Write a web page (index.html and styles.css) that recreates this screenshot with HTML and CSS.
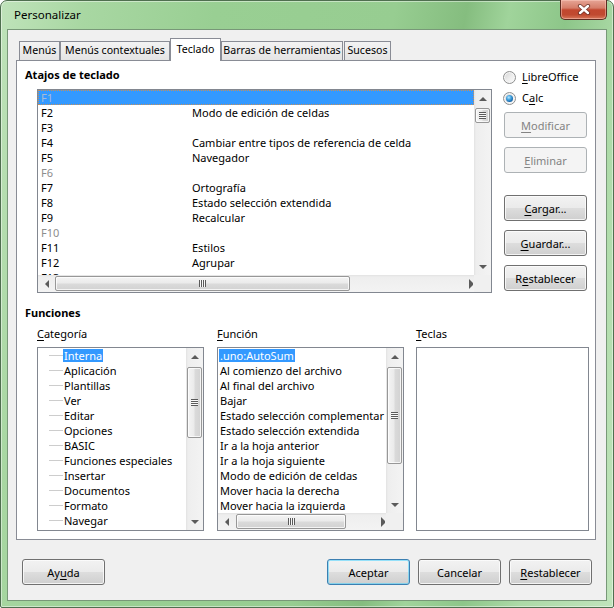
FILE: index.html
```html
<!DOCTYPE html>
<html lang="es">
<head>
<meta charset="utf-8">
<title>Personalizar</title>
<link rel="stylesheet" href="styles.css">
</head>
<body>
<div class="window">
  <div class="titlebar">
    <span class="title">Personalizar</span>
    <div class="close">
      <svg width="14" height="11" viewBox="0 0 14 11">
        <path d="M3 2 L11 9 M11 2 L3 9" stroke="#5a2a22" stroke-width="4.2" stroke-linecap="round" fill="none" opacity="0.75"/>
        <path d="M3 2 L11 9 M11 2 L3 9" stroke="#ffffff" stroke-width="2.4" stroke-linecap="round" fill="none"/>
      </svg>
    </div>
  </div>
  <div class="client">
    <div class="tabs">
      <div class="tab w1">Menús</div>
      <div class="tab w2">Menús contextuales</div>
      <div class="tab w3 active">Teclado</div>
      <div class="tab w4">Barras de herramientas</div>
      <div class="tab w5">Sucesos</div>
    </div>
    <div class="panel">
      <div class="top">
        <div class="left">
          <div class="heading">Atajos de teclado</div>
          <div class="listbox shortcuts">
            <div class="lb-main">
              <div class="rows">
                <div class="row sel"><span class="key dis">F1</span><span class="fn"></span></div>
                <div class="row"><span class="key">F2</span><span class="fn">Modo de edición de celdas</span></div>
                <div class="row"><span class="key">F3</span><span class="fn"></span></div>
                <div class="row"><span class="key">F4</span><span class="fn">Cambiar entre tipos de referencia de celda</span></div>
                <div class="row"><span class="key">F5</span><span class="fn">Navegador</span></div>
                <div class="row"><span class="key dis">F6</span><span class="fn"></span></div>
                <div class="row"><span class="key">F7</span><span class="fn">Ortografía</span></div>
                <div class="row"><span class="key">F8</span><span class="fn">Estado selección extendida</span></div>
                <div class="row"><span class="key">F9</span><span class="fn">Recalcular</span></div>
                <div class="row"><span class="key dis">F10</span><span class="fn"></span></div>
                <div class="row"><span class="key">F11</span><span class="fn">Estilos</span></div>
                <div class="row"><span class="key">F12</span><span class="fn">Agrupar</span></div>
                <div class="row"><span class="key">F13</span><span class="fn"></span></div>
              </div>
              <div class="vscroll">
                <div class="sbtn"><span class="arr up"></span></div>
                <div class="track">
                  <div class="thumb v" style="margin-top:1px;height:15px"><span class="grip gv"></span></div>
                </div>
                <div class="sbtn"><span class="arr down"></span></div>
              </div>
            </div>
            <div class="lb-bottom">
              <div class="hscroll">
                <div class="sbtn"><span class="arr left"></span></div>
                <div class="track">
                  <div class="thumb h" style="margin-left:0px;width:295px"><span class="grip gh"></span></div>
                </div>
                <div class="sbtn"><span class="arr right"></span></div>
              </div>
              <div class="corner"></div>
            </div>
          </div>
        </div>
        <div class="right">
          <div class="radio-row"><span class="radio"></span><span class="rlabel"><u>L</u>ibreOffice</span></div>
          <div class="radio-row r2"><span class="radio on"></span><span class="rlabel">C<u>a</u>lc</span></div>
          <div class="btn disabled b-mod"><u>M</u>odificar</div>
          <div class="btn disabled b-del"><u>E</u>liminar</div>
          <div class="btn b-load"><u>C</u>argar...</div>
          <div class="btn b-gap"><u>G</u>uardar...</div>
          <div class="btn b-gap">R<u>e</u>stablecer</div>
        </div>
      </div>
      <div class="heading fheading">Funciones</div>
      <div class="cols">
        <div class="col c1">
          <div class="clabel"><u>C</u>ategoría</div>
          <div class="listbox cat">
            <div class="rows">
              <div class="trow"><span class="tl"></span><span class="tt hl">Interna</span></div>
              <div class="trow"><span class="tl"></span><span class="tt">Aplicación</span></div>
              <div class="trow"><span class="tl"></span><span class="tt">Plantillas</span></div>
              <div class="trow"><span class="tl"></span><span class="tt">Ver</span></div>
              <div class="trow"><span class="tl"></span><span class="tt">Editar</span></div>
              <div class="trow"><span class="tl"></span><span class="tt">Opciones</span></div>
              <div class="trow"><span class="tl"></span><span class="tt">BASIC</span></div>
              <div class="trow"><span class="tl"></span><span class="tt">Funciones especiales</span></div>
              <div class="trow"><span class="tl"></span><span class="tt">Insertar</span></div>
              <div class="trow"><span class="tl"></span><span class="tt">Documentos</span></div>
              <div class="trow"><span class="tl"></span><span class="tt">Formato</span></div>
              <div class="trow"><span class="tl"></span><span class="tt">Navegar</span></div>
            </div>
            <div class="vscroll">
              <div class="sbtn"><span class="arr up"></span></div>
              <div class="track">
                <div class="thumb v" style="margin-top:2px;height:71px"><span class="grip gv"></span></div>
              </div>
              <div class="sbtn"><span class="arr down"></span></div>
            </div>
          </div>
        </div>
        <div class="col c2">
          <div class="clabel"><u>F</u>unción</div>
          <div class="listbox func">
            <div class="lb-main">
              <div class="rows">
                <div class="frow"><span class="ft hl">.uno:AutoSum</span></div>
                <div class="frow"><span class="ft">Al comienzo del archivo</span></div>
                <div class="frow"><span class="ft">Al final del archivo</span></div>
                <div class="frow"><span class="ft">Bajar</span></div>
                <div class="frow"><span class="ft">Estado selección complementar</span></div>
                <div class="frow"><span class="ft">Estado selección extendida</span></div>
                <div class="frow"><span class="ft">Ir a la hoja anterior</span></div>
                <div class="frow"><span class="ft">Ir a la hoja siguiente</span></div>
                <div class="frow"><span class="ft">Modo de edición de celdas</span></div>
                <div class="frow"><span class="ft">Mover hacia la derecha</span></div>
                <div class="frow"><span class="ft">Mover hacia la izquierda</span></div>
              </div>
              <div class="vscroll">
                <div class="sbtn"><span class="arr up"></span></div>
                <div class="track">
                  <div class="thumb v" style="margin-top:2px;height:97px"><span class="grip gv"></span></div>
                </div>
                <div class="sbtn"><span class="arr down"></span></div>
              </div>
            </div>
            <div class="lb-bottom">
              <div class="hscroll">
                <div class="sbtn"><span class="arr left"></span></div>
                <div class="track">
                  <div class="thumb h" style="margin-left:1px;width:110px"><span class="grip gh"></span></div>
                </div>
                <div class="sbtn"><span class="arr right"></span></div>
              </div>
              <div class="corner"></div>
            </div>
          </div>
        </div>
        <div class="col c3">
          <div class="clabel"><u>T</u>eclas</div>
          <div class="listbox keys"></div>
        </div>
      </div>
    </div>
    <div class="footer">
      <div class="btn fbtn">Ay<u>u</u>da</div>
      <div class="spacer"></div>
      <div class="btn fbtn default">Aceptar</div>
      <div class="btn fbtn fgap">Cancelar</div>
      <div class="btn fbtn fgap"><u>R</u>establecer</div>
    </div>
  </div>
</div>
</body>
</html>
```

FILE: styles.css
```css
* { box-sizing: border-box; }
html, body { margin: 0; padding: 0; }
body {
  width: 614px;
  height: 608px;
  overflow: hidden;
  font-family: "Noto Sans", "Open Sans", sans-serif;
  font-size: 11px;
  color: #000;
  background: #ffffff;
}
u { text-decoration-thickness: 1px; text-underline-offset: 2px; }

.window {
  width: 614px;
  height: 608px;
  display: flex;
  flex-direction: column;
  padding: 0 6px 6px 6px;
  border: 1px solid #4f6f4f;
  border-radius: 7px 7px 2px 2px;
  background: linear-gradient(100deg, #bfe3ba 0%, #a8d7a2 12%, #99cf93 30%, #97cd91 55%, #85bd7f 65%, #a0d49b 71%, #8dc689 79%, #acdaa7 87%, #c0e4bb 100%);
  box-shadow: inset 0 0 0 1px rgba(255,255,255,0.45);
}

.titlebar {
  height: 28px;
  display: flex;
  align-items: flex-start;
}
.title {
  margin-left: 7px;
  margin-top: 6px;
  font-size: 11.5px;
  line-height: 16px;
  color: #000;
}
.close {
  margin-left: auto;
  margin-top: -1px;
  width: 47px;
  height: 20px;
  border: 1px solid #5e2c22;
  border-top: none;
  border-radius: 0 0 5px 5px;
  background: linear-gradient(#e6a596 0%, #d57d69 42%, #c2472f 52%, #c04a30 78%, #d8785b 100%);
  box-shadow: inset 0 0 0 1px rgba(255,210,200,0.45);
  display: flex;
  align-items: center;
  justify-content: center;
}
.close svg { display: block; }

.client {
  flex: 1;
  display: flex;
  flex-direction: column;
  border: 1px solid #789878;
  background: #f0f0f0;
}

/* Tabs */
.tabs {
  margin-top: 8px;
  height: 22px;
  padding-left: 11px;
  display: flex;
  align-items: flex-end;
  position: relative;
  z-index: 2;
}
.tab {
  height: 19px;
  border: 1px solid #898c95;
  border-bottom: none;
  background: linear-gradient(#f3f3f3, #e4e4e4);
  text-align: center;
  line-height: 17px;
  font-size: 10.6px;
  white-space: nowrap;
  overflow: hidden;
}
.tab.active {
  height: 23px;
  margin-bottom: -1px;
  background: #ffffff;
  line-height: 20px;
}
.w1 { width: 41px; }
.w2 { width: 110px; }
.w3 { width: 51px; }
.w4 { width: 122px; }
.w5 { width: 47px; margin-left: 1px; }

/* Panel */
.panel {
  margin-left: 8px;
  width: 580px;
  height: 480px;
  border: 1px solid #898c95;
  background: #ffffff;
  padding: 6px 0 0 8px;
}
.heading {
  font-weight: bold;
  line-height: 16px;
  height: 16px;
}
.top { display: flex; }
.left { width: 467px; }
.left .heading { margin-bottom: 6px; }

.listbox {
  border: 1px solid #828790;
  background: #ffffff;
  overflow: hidden;
}
.shortcuts {
  margin-left: 12px;
  width: 455px;
  height: 204px;
  display: flex;
  flex-direction: column;
}
.lb-main { flex: 1; display: flex; min-height: 0; }
.lb-bottom { height: 17px; display: flex; }
.rows { flex: 1; overflow: hidden; min-width: 0; }

.row {
  height: 15px;
  line-height: 15px;
  display: flex;
  white-space: nowrap;
}
.row .key { width: 154px; padding-left: 3px; flex: none; }
.row .fn { flex: none; }
.key.dis { color: #8d8d8d; }
.row.sel {
  background: #3399ff;
  outline: 1px dotted #c8905a;
  outline-offset: -1px;
}
.row.sel .key.dis { color: #a7bcd6; }

/* Scrollbars */
.vscroll {
  width: 17px;
  flex: none;
  display: flex;
  flex-direction: column;
  background: linear-gradient(to right, #e2e2e2 0, #eeeeee 2px, #f3f3f3 100%);
}
.hscroll {
  flex: 1;
  display: flex;
  background: linear-gradient(to bottom, #e2e2e2 0, #eeeeee 2px, #f3f3f3 100%);
}
.corner { width: 17px; flex: none; background: #f0f0f0; }
.sbtn {
  width: 17px;
  height: 17px;
  flex: none;
  display: flex;
  align-items: center;
  justify-content: center;
}
.vscroll .track { flex: 1; display: flex; flex-direction: column; min-height: 0; }
.hscroll .track { flex: 1; display: flex; min-width: 0; }
.arr { width: 0; height: 0; display: block; }
.arr.up { border-left: 4px solid transparent; border-right: 4px solid transparent; border-bottom: 4px solid #5b5b5b; }
.arr.down { border-left: 4px solid transparent; border-right: 4px solid transparent; border-top: 4px solid #5b5b5b; }
.arr.left { border-top: 4px solid transparent; border-bottom: 4px solid transparent; border-right: 4px solid #5b5b5b; }
.arr.right { border-top: 4px solid transparent; border-bottom: 4px solid transparent; border-left: 4px solid #5b5b5b; }

.thumb {
  border: 1px solid #979797;
  border-radius: 2px;
  display: flex;
  align-items: center;
  justify-content: center;
  flex: none;
}
.thumb.v {
  margin-left: 1px;
  margin-right: 1px;
  background: linear-gradient(to right, #f4f4f4 0%, #ebebeb 45%, #dadada 55%, #d2d2d2 100%);
  box-shadow: inset 0 0 0 1px rgba(255,255,255,0.75);
}
.thumb.h {
  margin-top: 1px;
  margin-bottom: 1px;
  background: linear-gradient(to bottom, #f4f4f4 0%, #ebebeb 45%, #dadada 55%, #d2d2d2 100%);
  box-shadow: inset 0 0 0 1px rgba(255,255,255,0.75);
}
.grip { display: block; }
.grip.gv {
  width: 7px;
  height: 7px;
  background: repeating-linear-gradient(to bottom, #5a5a5a 0 1px, #f8f8f8 1px 2px);
}
.grip.gh {
  width: 7px;
  height: 7px;
  background: repeating-linear-gradient(to right, #5a5a5a 0 1px, #f8f8f8 1px 2px);
}

/* Right column */
.right {
  margin-left: 12px;
  width: 83px;
  padding-top: 2px;
  display: flex;
  flex-direction: column;
}
.radio-row { height: 16px; display: flex; align-items: center; white-space: nowrap; }
.radio-row.r2 { margin-top: 5px; }
.radio {
  width: 13px;
  height: 13px;
  margin-left: -1px;
  border-radius: 50%;
  border: 1px solid #8e8f8f;
  background: linear-gradient(135deg, #d4d4d4 0%, #eeeeee 55%, #fbfbfb 100%);
  box-shadow: inset 0 0 0 1px #f6f6f6;
  position: relative;
  flex: none;
}
.radio.on::after {
  content: "";
  position: absolute;
  left: 2px;
  top: 2px;
  width: 7px;
  height: 7px;
  border-radius: 50%;
  background: radial-gradient(circle at 40% 35%, #b6e6ff 0%, #48a6e0 35%, #1668ad 70%, #0c3f78 100%);
}
.rlabel { margin-left: 6px; line-height: 16px; }

.btn {
  width: 83px;
  height: 26px;
  border: 1px solid #707070;
  border-radius: 3px;
  background: linear-gradient(#f2f2f2 0%, #ebebeb 48%, #dddddd 52%, #cfcfcf 100%);
  box-shadow: inset 0 0 0 1px rgba(252,252,252,0.8);
  display: flex;
  align-items: center;
  justify-content: center;
  white-space: nowrap;
  flex: none;
}
.btn.disabled {
  border-color: #adb2b5;
  background: #f4f4f4;
  box-shadow: none;
  color: #838383;
}
.b-mod { margin-top: 6px; }
.b-del { margin-top: 9px; }
.b-load { margin-top: 22px; }
.b-gap { margin-top: 9px; }

/* Functions */
.fheading { margin-top: 12px; }
.cols { display: flex; margin-top: 5px; margin-left: 12px; }
.col { display: flex; flex-direction: column; }
.c1 { width: 167px; }
.c2 { width: 187px; margin-left: 13px; }
.c3 { width: 173px; margin-left: 12px; }
.clabel { line-height: 16px; height: 16px; margin-bottom: 5px; }
.cat, .func, .keys { height: 184px; }
.cat { display: flex; }
.func { display: flex; flex-direction: column; }

.trow {
  height: 15px;
  display: flex;
  align-items: center;
  white-space: nowrap;
}
.tl {
  width: 14px;
  margin-left: 11px;
  height: 0;
  border-top: 1px solid #cdcdcd;
  flex: none;
}
.tt { padding: 0 1px; line-height: 13px; }
.hl { background: #3399ff; color: #ffffff; }

.frow {
  height: 15px;
  display: flex;
  align-items: center;
  white-space: nowrap;
  padding-left: 1px;
}
.ft { padding: 0 1px; line-height: 13px; }

/* Footer */
.footer {
  display: flex;
  padding: 19px 14px 0 14px;
}
.spacer { flex: 1; }
.fgap { margin-left: 8px; }
.btn.default {
  border-color: #3c7fb1;
  box-shadow: inset 0 0 0 1px rgba(72, 209, 255, 0.55);
}
```
